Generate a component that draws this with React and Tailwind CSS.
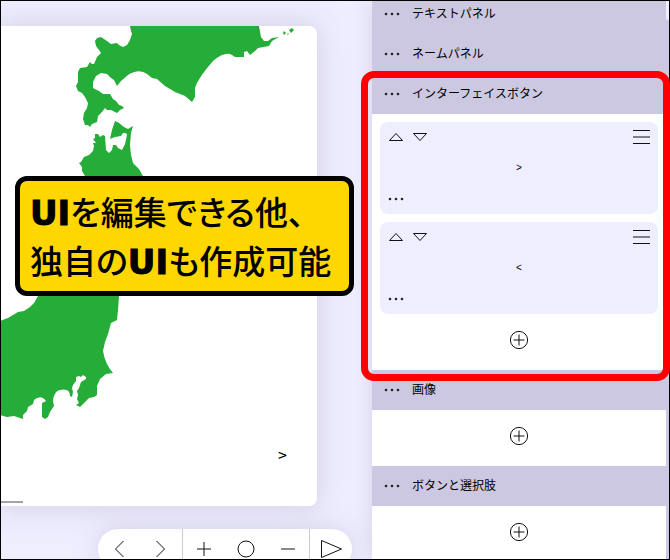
const FONT = "font-['Liberation_Sans','Noto_Sans_CJK_JP',sans-serif]";

function Dots() {
  return (
    <svg width="16" height="16" viewBox="0 0 16 16" fill="#222" aria-hidden="true">
      <circle cx="2" cy="8" r="1.3" />
      <circle cx="8" cy="8" r="1.3" />
      <circle cx="14" cy="8" r="1.3" />
    </svg>
  );
}

function LineIcon({ d, size = 24 }) {
  return (
    <svg width={size} height={size} viewBox={`0 0 ${size} ${size}`} fill="none" stroke="#111" strokeWidth="1" aria-hidden="true">
      <path d={d} />
    </svg>
  );
}

function AddRow() {
  return (
    <div className="flex h-14 justify-center pt-4">
      <button type="button" aria-label="追加" className="size-5">
        <LineIcon size={20} d="M10 1.4a8.6 8.6 0 1 0 0 17.2a8.6 8.6 0 1 0 0-17.2M10 4.5v11M4.5 10h11" />
      </button>
    </div>
  );
}

function ButtonCard({ label }) {
  return (
    <li className="flex h-[92px] flex-col justify-between rounded-lg bg-[#efeeff] px-1 py-[3px]">
      <div className="flex justify-between">
        <div className="flex">
          <button type="button" aria-label="上へ">
            <LineIcon d="M5.5 15.5h13L12 8.5z" />
          </button>
          <button type="button" aria-label="下へ">
            <LineIcon d="M5.5 8.5h13L12 15.5z" />
          </button>
        </div>
        <button type="button" aria-label="並べ替え" className="pr-[1px]">
          <LineIcon d="M4 5.5h17M4 12h17M4 18.5h17" />
        </button>
      </div>
      <p className="text-center text-[10px] leading-3">{label}</p>
      <button type="button" aria-label="メニュー" className="flex h-6 w-6 items-center justify-center">
        <Dots />
      </button>
    </li>
  );
}

function Section({ title, children, highlighted = false }) {
  return (
    <section className="relative">
      <h2 className="flex h-10 items-center bg-[#cdc8e1] pl-3 text-[12px]">
        <button type="button" className="flex items-center gap-3">
          <Dots />
          {title}
        </button>
      </h2>
      {children}
      {highlighted && (
        <div className="pointer-events-none absolute -top-[3px] -right-1 -bottom-[11px] -left-[11px] z-20 rounded-[13px] border-[7px] border-[#ff0000]" />
      )}
    </section>
  );
}

function JapanMap() {
  return (
    <svg className="absolute top-0 left-0" width="317" height="480" viewBox="0 26 317 480" fill="#26ac38" aria-hidden="true">
      <path d="M130 26L131 31L132 34L130 40L127 45L123 47L119 45L117 43L111 44L107 41L101 37L97 38L95 41L96 46L99 50L101 53L97 57L94 64L92 64L90 62L87 67L80 68L78 72L78 82L76 86L78 91L82 93L85 97L88 103L87 108L84 113L83 119L85 125L88 125L90 127L92 124L97 122L98 116L102 112L105 108L107 110L111 110L117 113L120 110L124 108L122 106L119 105L116 101L113 99L110 94L103 94L99 91L93 88L93 82L96 76L101 73L107 74L111 78L114 80L117 86L121 81L128 75Q139 68 147 74L152 78L157 79L165 86L175 92L185 96L192 102L195 97L195 88Q198 78 213 61Q225 51 232 55L235 57L244 57L244 52L247 51L250 55L255 51L258 48L269 46L272 41L279 37L272 38L268 41L264 41L261 37L259 26Z" />
      <path d="M283 33l1-2l2 2l-2 2zM289 30l3-2l2 2l-3 3zM287 34l2-1l-1 2z" />
      <path d="M115 121L119 123L124 127L128 129L133 126L131 133L130 145L131 155L133 163L139 169L144 178L142 220L119 296L118 310L117 320L111 323L108 334L105 342L103 351Q105 364 113 373L106 374L100 379L97 386L97 395L94 397L89 398L83 404L80 407L76 405L79 403L77 399L78 395L77 391L79 388L81 382L86 379L86 377L83 375L81 377L79 376L76 377L76 381L73 385L72 388L73 392L72 397L70 396Q70 388 60 390Q54 391 53 401L54 406L50 412L48 417L45 419L42 417L42 403L46 401Q41 394 34 400L33 404L28 407L27 411L23 415L23 419L14 416L7 417L0 415L0 321L8 318L18 312L24 311L30 307L34 303L38 296L87 200L85 176L82 171L82 167L79 163L81 162L84 157L89 155L93 151L94 146L93 143L96 143L93 139L95 138L95 134L98 134L100 137L103 135L105 136L106 150L109 153L112 150L113 145L116 145L118 148L122 150L125 144L127 135L126 133L123 133L121 136L115 137L110 139L112 130Z" />
    </svg>
  );
}

function ToolButton({ label, d }) {
  return (
    <button type="button" aria-label={label} className="flex h-10 w-[42px] items-center justify-center">
      <LineIcon d={d} />
    </button>
  );
}

function Latin({ children }) {
  return (
    <span className="text-[34px] leading-none font-black [-webkit-text-stroke:1px_black] font-['DejaVu_Sans',sans-serif]">
      {children}
    </span>
  );
}

function Editor() {
  return (
    <main className="-mb-[9px] flex min-w-0 flex-1 flex-col pt-[26px]">
      <div className="relative mr-[55px] flex-1 rounded-r-lg bg-white shadow-[0_0_28px_3px_#cdc8e1c8]">
        <JapanMap />
        <button type="button" className="absolute right-[30px] bottom-10 text-[16px] leading-6 font-['Noto_Sans_CJK_JP',sans-serif]">
          &gt;
        </button>
        <div className="absolute bottom-[3px] left-0 h-[2px] w-[23px] bg-[#a8a3a8]" />
        <p className="absolute top-[150px] left-[15px] w-[339px] rounded-xl border-[5px] border-black bg-[#ffd700] py-[6px] pl-[10px] text-[33px] leading-[49px] font-medium whitespace-nowrap [font-feature-settings:'palt'] font-['Noto_Sans_CJK_JP',sans-serif]">
          <Latin>UI</Latin>を編集できる他、
          <br />
          独自の<Latin>UI</Latin>も作成可能
        </p>
      </div>
      <div className="mt-[23px] mr-5 flex self-end rounded-full bg-white shadow-[0_0_24px_#cdc8e1c8]">
        <ToolButton label="前へ" d="M16.5 4L8.5 12L16.5 20" />
        <ToolButton label="次へ" d="M7.5 4L15.5 12L7.5 20" />
        <div className="w-px bg-[#cdc8e1]" />
        <ToolButton label="拡大" d="M5 12h14M12 5v14" />
        <ToolButton label="等倍" d="M12 4a8 8 0 1 0 0 16a8 8 0 1 0 0-16" />
        <ToolButton label="縮小" d="M5 12h14" />
        <div className="w-px bg-[#cdc8e1]" />
        <ToolButton label="再生" d="M2.5 3.5v17L22.5 12z" />
      </div>
    </main>
  );
}

export default function App() {
  return (
    <div className={`relative flex h-screen overflow-hidden bg-[#efeeff] text-black ${FONT}`}>
      <Editor />
      <aside className="flex w-[298px] shrink-0 bg-[#cdc8e1] shadow-[0_0_20px_#cdc8e1c8]">
        <div className="-mt-[6px] min-w-0 flex-1">
          <Section title="テキストパネル" />
          <Section title="ネームパネル" />
          <Section title="インターフェイスボタン" highlighted>
            <div className="bg-white">
              <ul className="flex flex-col gap-2 px-2 pt-2">
                <ButtonCard label=">" />
                <ButtonCard label="<" />
              </ul>
              <AddRow />
            </div>
          </Section>
          <Section title="画像">
            <div className="bg-white">
              <AddRow />
            </div>
          </Section>
          <Section title="ボタンと選択肢">
            <div className="bg-white">
              <AddRow />
            </div>
          </Section>
        </div>
        <div className="h-5 w-1 rounded-b-sm bg-[#efeeff]" />
      </aside>
      <div className="pointer-events-none absolute inset-0 z-10 border border-black" />
    </div>
  );
}
